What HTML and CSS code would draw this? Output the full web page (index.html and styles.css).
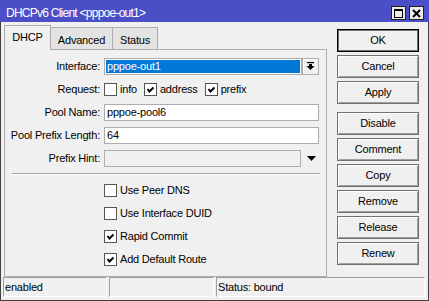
FILE: index.html
```html
<!DOCTYPE html>
<html>
<head>
<meta charset="utf-8">
<link rel="stylesheet" href="styles.css">
</head>
<body>
<div class="window">
  <div class="titlebar">
    <span class="title">DHCPv6 Client &lt;pppoe-out1&gt;</span>
    <div class="tbtns">
      <span class="tbtn"><svg width="9" height="9" viewBox="0 0 9 9"><rect x="0.5" y="0.5" width="8" height="8" fill="none" stroke="#000"/><rect x="0" y="0" width="9" height="2" fill="#000"/></svg></span>
      <span class="tbtn"><svg width="9" height="9" viewBox="0 0 9 9"><path d="M1 1 L8 8 M8 1 L1 8" stroke="#000" stroke-width="2"/></svg></span>
    </div>
  </div>
  <div class="body">
    <div class="main">
      <div class="left">
        <div class="tabs">
          <div class="tab active">DHCP</div>
          <div class="tab t-adv">Advanced</div>
          <div class="tab t-status">Status</div>
        </div>
        <div class="panel">
          <div class="form">
            <div class="label">Interface:</div>
            <div class="ctl">
              <div class="field sel"><span class="selfill">pppoe-out1</span></div>
              <span class="ddbtn"><svg width="9" height="9" viewBox="0 0 9 9"><rect x="1" y="0" width="7" height="1.2" fill="#000"/><rect x="3" y="2" width="3" height="2" fill="#000"/><polygon points="0.5,4 8.5,4 4.5,8" fill="#000"/></svg></span>
            </div>
            <div class="label">Request:</div>
            <div class="ctl checksrow">
              <span class="chk"><span class="box"></span>info</span>
              <span class="chk"><span class="box on"><svg width="11" height="11" viewBox="0 0 11 11"><polyline points="2.5,5 4.5,7.5 8.5,3.5" fill="none" stroke="#000" stroke-width="2"/></svg></span>address</span>
              <span class="chk"><span class="box on"><svg width="11" height="11" viewBox="0 0 11 11"><polyline points="2.5,5 4.5,7.5 8.5,3.5" fill="none" stroke="#000" stroke-width="2"/></svg></span>prefix</span>
            </div>
            <div class="label">Pool Name:</div>
            <div class="ctl"><div class="field full">pppoe-pool6</div></div>
            <div class="label">Pool Prefix Length:</div>
            <div class="ctl"><div class="field full">64</div></div>
            <div class="label">Prefix Hint:</div>
            <div class="ctl">
              <div class="field dis"></div>
              <span class="tri"><svg width="9" height="5" viewBox="0 0 9 5"><polygon points="0,0 9,0 4.5,5" fill="#000"/></svg></span>
            </div>
          </div>
          <div class="sep"></div>
          <div class="checks">
            <span class="chk"><span class="box"></span>Use Peer DNS</span>
            <span class="chk"><span class="box"></span>Use Interface DUID</span>
            <span class="chk"><span class="box on"><svg width="11" height="11" viewBox="0 0 11 11"><polyline points="2.5,5 4.5,7.5 8.5,3.5" fill="none" stroke="#000" stroke-width="2"/></svg></span>Rapid Commit</span>
            <span class="chk"><span class="box on"><svg width="11" height="11" viewBox="0 0 11 11"><polyline points="2.5,5 4.5,7.5 8.5,3.5" fill="none" stroke="#000" stroke-width="2"/></svg></span>Add Default Route</span>
          </div>
        </div>
      </div>
      <div class="buttons">
        <div class="btn default">OK</div>
        <div class="btn">Cancel</div>
        <div class="btn">Apply</div>
        <div class="btn gap">Disable</div>
        <div class="btn">Comment</div>
        <div class="btn">Copy</div>
        <div class="btn">Remove</div>
        <div class="btn">Release</div>
        <div class="btn">Renew</div>
      </div>
    </div>
    <div class="statusbar">
      <div class="seg s1">enabled</div>
      <div class="seg s2"></div>
      <div class="seg s3">Status: bound</div>
    </div>
  </div>
</div>
</body>
</html>
```
FILE: styles.css
```css
* { box-sizing: border-box; }
html, body { margin: 0; padding: 0; background: #f0f0f0; }
body {
  font-family: "Liberation Sans", Arial, sans-serif;
  font-size: 11px;
  letter-spacing: -0.2px;
  color: #000;
}
.window { width: 429px; height: 301px; display: flex; flex-direction: column; background: #f0f0f0; }
.titlebar {
  height: 22px;
  background: #4a4fc7;
  display: flex;
  align-items: flex-start;
  padding-left: 6px;
  padding-right: 5px;
}
.title {
  color: #fff;
  font-size: 12px;
  letter-spacing: -0.75px;
  line-height: 16px;
  padding-top: 5px;
}
.tbtns { margin-left: auto; display: flex; gap: 3px; padding-top: 6px; }
.tbtn {
  width: 15px; height: 14px;
  border: 1px solid #202020;
  background: #ececec;
  display: flex; align-items: center; justify-content: center;
}
.body {
  height: 279px;
  border: 1px solid #404040;
  border-top: none;
  display: flex;
  flex-direction: column;
}
.main { display: flex; align-items: flex-start; padding-left: 3px; padding-top: 3px; height: 255px; }
.left { width: 323px; }
.tabs { display: flex; align-items: flex-end; height: 24px; }
.tab {
  height: 22px;
  border: 1px solid #adadad;
  border-bottom: none;
  background: #e3e3e3;
  text-align: center;
  line-height: 22px;
  padding-top: 1px;
}
.tab.active {
  width: 47px;
  height: 25px;
  margin-bottom: -1px;
  background: #f0f0f0;
  position: relative;
  z-index: 1;
  line-height: 23px;
  padding-top: 0;
}
.t-adv { width: 63px; margin-left: -1px; }
.t-status { width: 46px; margin-left: -1px; }
.panel {
  height: 228px;
  border: 1px solid #adadad;
  padding-top: 8px;
}
.form {
  display: grid;
  grid-template-columns: 95px 215px;
  column-gap: 4px;
  row-gap: 6px;
}
.label { text-align: right; line-height: 17px; height: 17px; white-space: nowrap; }
.ctl { display: flex; align-items: center; height: 17px; }
.field {
  height: 17px;
  border: 1px solid #adadad;
  background: #fff;
  line-height: 15px;
  padding-left: 2px;
}
.field.full { width: 215px; }
.field.sel { width: 198px; padding: 1px; }
.selfill { display: block; height: 13px; background: #0078d7; color: #fff; line-height: 13px; padding-left: 1px; }
.field.dis { width: 197px; background: #f0f0f0; }
.ddbtn {
  width: 17px; height: 17px;
  margin-left: 0;
  border: 1px solid #adadad;
  background: #f0f0f0;
  box-shadow: inset 1px 1px #fff;
  display: flex; align-items: center; justify-content: center;
}
.tri { margin-left: 6px; display: flex; }
.checksrow { gap: 7px; }
.chk { display: flex; align-items: center; line-height: 17px; height: 17px; white-space: nowrap; }
.box {
  width: 13px; height: 13px;
  border: 1px solid #555;
  background: #fff;
  margin-right: 3px;
  display: flex; align-items: center; justify-content: center;
}
.sep {
  margin: 6px 6px 0 7px;
  height: 2px;
  border-top: 1px solid #a0a0a0;
  border-bottom: 1px solid #fff;
}
.checks {
  display: flex;
  flex-direction: column;
  gap: 6px;
  padding-left: 99px;
  margin-top: 7px;
}
.buttons { margin-left: 10px; margin-top: 4px; width: 82px; display: flex; flex-direction: column; gap: 3px; }
.btn {
  height: 23px;
  border: 1px solid #707070;
  box-shadow: inset 1px 1px #fff, inset -1px -1px #a0a0a0;
  background: #f0f0f0;
  text-align: center;
  line-height: 21px;
}
.btn.default { border-color: #000; box-shadow: inset 0 0 0 1px #707070; }
.btn.gap { margin-top: 5px; }
.statusbar { display: flex; height: 20px; padding-left: 2px; gap: 2px; }
.seg {
  height: 20px;
  border: 1px solid;
  border-color: #a0a0a0 #fff #fff #a0a0a0;
  line-height: 18px;
  padding-left: 1px;
}
.s1 { width: 104px; }
.s2 { width: 105px; }
.s3 { width: 209px; }
```
